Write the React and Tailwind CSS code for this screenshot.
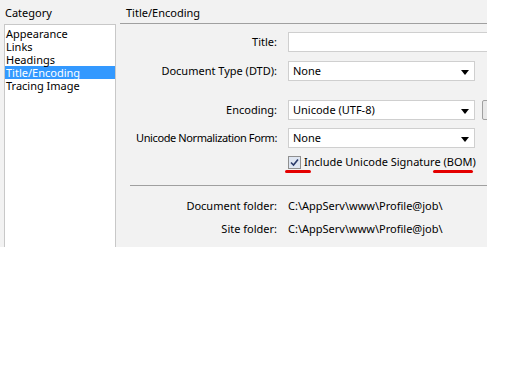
import React from 'react';

const categories = ['Appearance', 'Links', 'Headings', 'Title/Encoding', 'Tracing Image'];

const Arrow = () => (
  <svg width="8" height="5" viewBox="0 0 8 5" className="absolute right-[5px] top-[8px]">
    <path d="M0 0 H8 L4 5 Z" fill="#000" />
  </svg>
);

const Select = ({ value }) => (
  <div className="relative w-[187px] h-[20px] bg-white border border-[#cfcfcf] pl-[4px] leading-[18px]">
    {value}
    <Arrow />
  </div>
);

const Label = ({ children, className }) => (
  <div className={'w-[164px] shrink-0 text-right pr-[3px] ' + (className || '')}>{children}</div>
);

const Row = ({ label, children, className, labelClass }) => (
  <div className={'flex items-center ' + (className || '')}>
    <Label className={labelClass}>{label}</Label>
    <div className="ml-[8px] flex items-center">{children}</div>
  </div>
);

const App = () => {
  return (
    <div className="w-[512px] h-[384px] bg-white text-black text-[11px]" style={{ fontFamily: '"Noto Sans", "Open Sans", sans-serif' }}>
      <div className="w-[487px] h-[247px] bg-[#f2f2f2] flex overflow-hidden">
        {/* left column */}
        <div className="w-[116px] shrink-0 flex flex-col pl-[4px]">
          <div className="h-[24px] pt-[5px] pl-[1px]">Category</div>
          <div className="flex-1 bg-white border border-[#c8c8c8] border-b-0 pt-[2px]">
            {categories.map((c) => (
              <div
                key={c}
                className={
                  'h-[13px] leading-[13px] pl-[1px] ' +
                  (c === 'Title/Encoding' ? 'bg-[#3399ff] text-white' : '')
                }
              >
                {c}
              </div>
            ))}
          </div>
        </div>

        {/* right column */}
        <div className="flex-1 flex flex-col">
          <div className="h-[24px] pt-[5px] pl-[6px] ml-[4px] border-b border-[#a0a0a0]">Title/Encoding</div>

          <Row label="Title:" className="mt-[8px]">
            <div className="w-[220px] h-[20px] bg-white border border-[#cfcfcf]" />
          </Row>

          <Row label="Document Type (DTD):" className="mt-[9px]">
            <Select value="None" />
          </Row>

          <Row label="Encoding:" className="mt-[19px]">
            <Select value="Unicode (UTF-8)" />
            <div className="ml-[7px] w-[20px] h-[20px] border border-[#a0a0a0] rounded-[2px] bg-[#e8e8e8]" />
          </Row>

          <Row label="Unicode Normalization Form:" className="mt-[8px]" labelClass="tracking-[-0.4px]">
            <Select value="None" />
          </Row>

          <div className="flex mt-[8px]">
            <div className="w-[172px] shrink-0" />
            <div className="flex flex-col">
              <div className="flex items-center h-[13px]">
                <div className="w-[13px] h-[13px] border border-[#8f8f8f] bg-[#dfe6f2] flex items-center justify-center">
                  <svg width="9" height="9" viewBox="0 0 9 9">
                    <path d="M1 4.5 L3.5 7 L8 1.5" stroke="#2a3a6a" strokeWidth="1.6" fill="none" />
                  </svg>
                </div>
                <span className="ml-[3px]">Include Unicode Signature (BOM)</span>
              </div>
              <div className="relative h-[6px]">
                <div className="absolute left-[-3px] top-[1px] w-[26px] h-[3px] rounded-full bg-[#e40000]" />
                <div className="absolute left-[145px] top-[1px] w-[40px] h-[3px] rounded-full bg-[#e40000]" />
              </div>
            </div>
          </div>

          <div className="mt-[10px] ml-[14px] border-t border-[#a0a0a0]" />

          <Row label="Document folder:" className="mt-[13px] h-[14px]">
            <span>C:\AppServ\www\Profile@job\</span>
          </Row>

          <Row label="Site folder:" className="mt-[9px] h-[14px]">
            <span>C:\AppServ\www\Profile@job\</span>
          </Row>
        </div>
      </div>
    </div>
  );
};

export default App;
